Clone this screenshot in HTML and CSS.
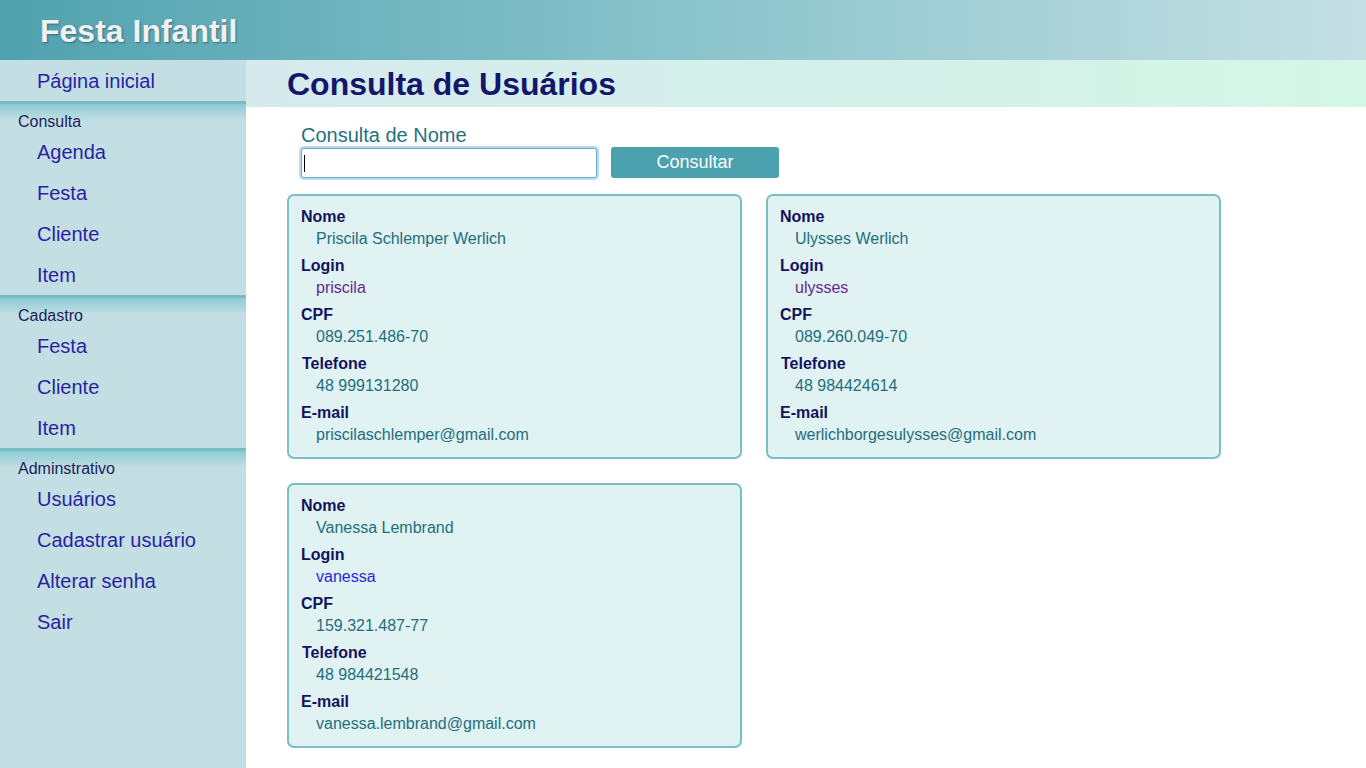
FILE: index.html
```html
<!DOCTYPE html>
<html lang="pt-BR">
<head>
<meta charset="utf-8">
<title>Festa Infantil - Consulta de Usuários</title>
<link rel="stylesheet" href="styles.css">
</head>
<body>
<header class="topbar">
  <h1 class="brand">Festa Infantil</h1>
</header>
<div class="layout">
  <nav class="sidebar">
    <a class="nav-item" href="#">Página inicial</a>
    <div class="nav-section">Consulta</div>
    <a class="nav-item" href="#">Agenda</a>
    <a class="nav-item" href="#">Festa</a>
    <a class="nav-item" href="#">Cliente</a>
    <a class="nav-item" href="#">Item</a>
    <div class="nav-section">Cadastro</div>
    <a class="nav-item" href="#">Festa</a>
    <a class="nav-item" href="#">Cliente</a>
    <a class="nav-item" href="#">Item</a>
    <div class="nav-section">Adminstrativo</div>
    <a class="nav-item" href="#">Usuários</a>
    <a class="nav-item" href="#">Cadastrar usuário</a>
    <a class="nav-item" href="#">Alterar senha</a>
    <a class="nav-item" href="#">Sair</a>
  </nav>
  <main class="content">
    <div class="page-title"><h2>Consulta de Usuários</h2></div>
    <form class="search">
      <label class="search-label" for="nome">Consulta de Nome</label>
      <div class="search-row">
        <div class="input-wrap">
          <input id="nome" class="search-input" type="text">
          <span class="caret"></span>
        </div>
        <button class="search-btn" type="button">Consultar</button>
      </div>
    </form>
    <div class="cards">
      <div class="card">
        <div class="field"><div class="label">Nome</div><div class="value">Priscila Schlemper Werlich</div></div>
        <div class="field"><div class="label">Login</div><div class="value"><a class="login visited" href="#">priscila</a></div></div>
        <div class="field"><div class="label">CPF</div><div class="value">089.251.486-70</div></div>
        <div class="field"><div class="label tel">Telefone</div><div class="value">48 999131280</div></div>
        <div class="field"><div class="label">E-mail</div><div class="value">priscilaschlemper@gmail.com</div></div>
      </div>
      <div class="card">
        <div class="field"><div class="label">Nome</div><div class="value">Ulysses Werlich</div></div>
        <div class="field"><div class="label">Login</div><div class="value"><a class="login visited" href="#">ulysses</a></div></div>
        <div class="field"><div class="label">CPF</div><div class="value">089.260.049-70</div></div>
        <div class="field"><div class="label tel">Telefone</div><div class="value">48 984424614</div></div>
        <div class="field"><div class="label">E-mail</div><div class="value">werlichborgesulysses@gmail.com</div></div>
      </div>
      <div class="card">
        <div class="field"><div class="label">Nome</div><div class="value">Vanessa Lembrand</div></div>
        <div class="field"><div class="label">Login</div><div class="value"><a class="login" href="#">vanessa</a></div></div>
        <div class="field"><div class="label">CPF</div><div class="value">159.321.487-77</div></div>
        <div class="field"><div class="label tel">Telefone</div><div class="value">48 984421548</div></div>
        <div class="field"><div class="label">E-mail</div><div class="value">vanessa.lembrand@gmail.com</div></div>
      </div>
    </div>
  </main>
</div>
</body>
</html>
```
FILE: styles.css
```css
* { box-sizing: border-box; }
html, body { margin: 0; padding: 0; }
body {
  font-family: "Liberation Sans", Arial, sans-serif;
  background: #ffffff;
  min-height: 100vh;
  display: flex;
  flex-direction: column;
}
.topbar {
  height: 60px;
  flex: none;
  background: linear-gradient(to right, #50a2af 0%, #8ac3cb 50%, #c5e0e4 100%);
  padding-left: 40px;
  display: flex;
  align-items: center;
}
.brand {
  margin: 0;
  font-size: 32px;
  font-weight: bold;
  color: #f1f1f1;
  text-shadow: 1px 1px 2px rgba(0, 40, 50, 0.45);
  line-height: 1;
  padding-top: 1px;
}
.layout {
  flex: 1;
  display: flex;
}
.sidebar {
  width: 246px;
  flex: none;
  background: #c4dfe3;
  display: flex;
  flex-direction: column;
}
.nav-item {
  display: block;
  height: 41px;
  padding-top: 1px;
  line-height: 40px;
  padding-left: 37px;
  font-size: 20px;
  color: #2a1fa3;
  text-decoration: none;
}
.nav-section {
  height: 30px;
  border-top: 3px solid #78bcc6;
  background: linear-gradient(to bottom, #8ccbd3 0px, #c4dfe3 17px, #c4dfe3 100%);
  padding-top: 10px;
  padding-left: 18px;
  font-size: 16px;
  line-height: 16px;
  color: #1c1b5e;
}
.content {
  flex: 1;
  min-width: 0;
}
.page-title {
  height: 47px;
  background: linear-gradient(to right, #d6eaee 0%, #d4f6e6 100%);
  padding-left: 41px;
  display: flex;
  align-items: center;
}
.page-title h2 {
  margin: 0;
  font-size: 32px;
  font-weight: bold;
  color: #14166b;
  line-height: 1;
}
.search {
  padding: 17px 0 0 55px;
  display: flex;
  flex-direction: column;
}
.search-label {
  font-size: 20px;
  line-height: 22px;
  color: #27707f;
}
.search-row {
  display: flex;
  align-items: center;
  gap: 14px;
  margin-top: 1px;
}
.input-wrap {
  position: relative;
  width: 296px;
  height: 30px;
}
.search-input {
  width: 100%;
  height: 100%;
  border: 1px solid #6cb2bd;
  border-radius: 3px;
  box-shadow: 0 0 0 2px #b8d8f6;
  background: #ffffff;
  outline: none;
  font-size: 16px;
  font-family: inherit;
  padding: 0 4px;
}
.caret {
  position: absolute;
  left: 3px;
  top: 7px;
  width: 1px;
  height: 17px;
  background: #000000;
}
.search-btn {
  width: 168px;
  height: 31px;
  border: none;
  border-radius: 3px;
  background: #4ca1ae;
  color: #ffffff;
  font-family: inherit;
  font-size: 18px;
  padding: 0;
}
.cards {
  display: grid;
  grid-template-columns: repeat(2, 455px);
  column-gap: 24px;
  row-gap: 24px;
  padding: 16px 0 20px 41px;
}
.card {
  background: #e0f2f2;
  border: 2px solid #7abec7;
  border-radius: 7px;
  padding: 10px 12px 6px 12px;
  height: 265px;
}
.field {
  margin-bottom: 5px;
}
.label {
  font-size: 16px;
  font-weight: bold;
  line-height: 22px;
  color: #14125e;
}
.label.tel { padding-left: 1px; }
.value {
  font-size: 16px;
  line-height: 22px;
  padding-left: 15px;
  color: #1f6e7e;
}
.login {
  text-decoration: none;
  color: #2d1fe0;
}
.login.visited {
  color: #652a8e;
}
```
